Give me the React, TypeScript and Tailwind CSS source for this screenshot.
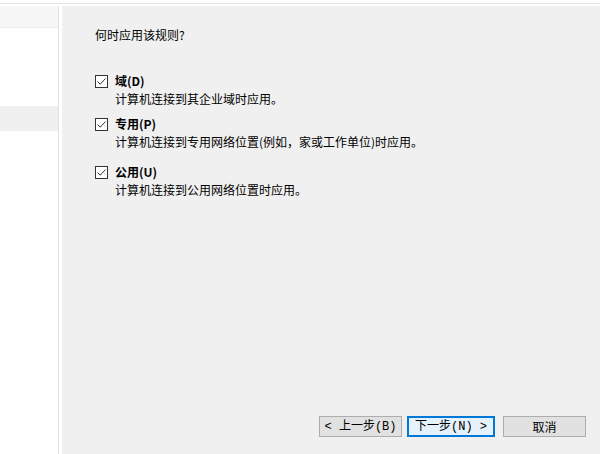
import React from "react";

const ui = { fontFamily: '"Noto Sans CJK SC", "Noto Sans", sans-serif' };
const mono = { fontFamily: '"Liberation Mono", "Noto Sans CJK SC", monospace' };

function CheckBox() {
  return (
    <div className="w-[13px] h-[13px] border border-[#333] bg-white flex items-center justify-center shrink-0">
      <svg width="11" height="11" viewBox="0 0 11 11">
        <path d="M1.5 5.5 L4.2 8.2 L9.5 2.5" fill="none" stroke="#333" strokeWidth="1" />
      </svg>
    </div>
  );
}

const options = [
  { title: "域(D)", desc: "计算机连接到其企业域时应用。", gap: "" },
  { title: "专用(P)", desc: "计算机连接到专用网络位置(例如，家或工作单位)时应用。", gap: "mt-[9px]" },
  { title: "公用(U)", desc: "计算机连接到公用网络位置时应用。", gap: "mt-[14px]" },
];

export default function App() {
  return (
    <div className="w-[600px] h-[454px] bg-white overflow-hidden text-black text-[12px]" style={ui}>
      <div className="h-[3px] bg-white" />
      <div className="h-[1px] bg-[#e6e6e6]" />
      <div className="h-[2px] bg-white" />
      <div className="flex h-[448px]">
        {/* left nav */}
        <div className="w-[59px] border-r border-[#e3e3e3] flex flex-col">
          <div className="h-[22px] bg-[#f7f7f7] border-b border-[#ececec]" />
          <div className="h-[78px]" />
          <div className="h-[25px] bg-[#f0f0f0]" />
        </div>
        <div className="w-[3px] bg-white" />
        {/* main */}
        <div className="flex-1 bg-[#f0f0f0] flex flex-col pl-[33px] pt-[21px]">
          <div className="leading-[16px]">何时应用该规则?</div>
          <div className="mt-[30px] flex flex-col">
            {options.map((o) => (
              <div key={o.title} className={o.gap}>
                <div className="flex items-center gap-[7px]">
                  <CheckBox />
                  <span className="font-bold leading-[16px]">{o.title}</span>
                </div>
                <div className="pl-[20px] leading-[16px] mt-[2px]">{o.desc}</div>
              </div>
            ))}
          </div>
          <div className="flex-1" />
          <div className="flex items-center mb-[17px] ml-[224px] text-[12px]" style={mono}>
            <button className="w-[83px] h-[21px] bg-[#e1e1e1] border border-[#adadad] flex items-center justify-center">
              &lt; 上一步(B)
            </button>
            <button className="ml-[5px] w-[88px] h-[21px] bg-[#e5f1fb] border-2 border-[#0078d7] flex items-center justify-center">
              下一步(N) &gt;
            </button>
            <button className="ml-[8px] w-[83px] h-[21px] bg-[#e1e1e1] border border-[#adadad] flex items-center justify-center" style={ui}>
              取消
            </button>
          </div>
        </div>
      </div>
    </div>
  );
}
